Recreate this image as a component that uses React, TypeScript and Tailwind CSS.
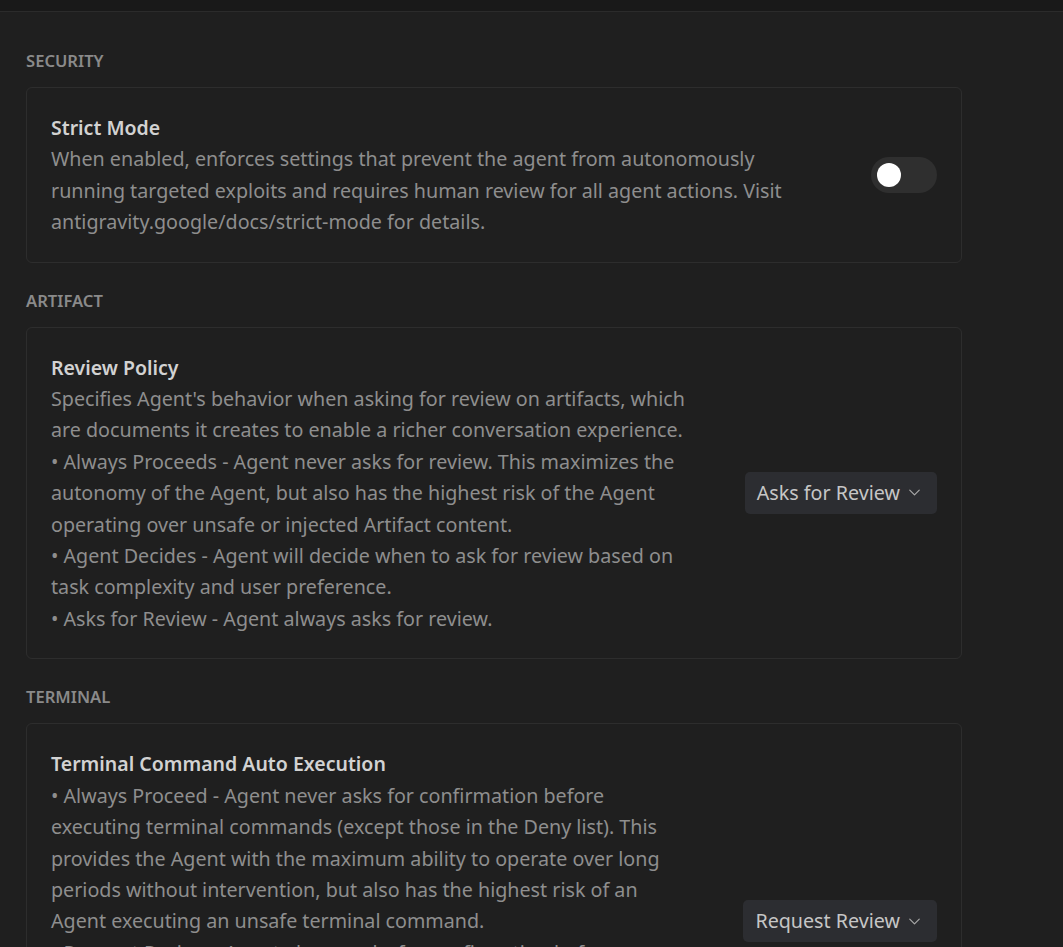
import { ChevronDown } from "lucide-react"

type Setting = {
  title: string
  lines: string[]
  control: "toggle" | "select"
  value?: string
}

const sections: { label: string; settings: Setting[] }[] = [
  {
    label: "SECURITY",
    settings: [
      {
        title: "Strict Mode",
        control: "toggle",
        lines: [
          "When enabled, enforces settings that prevent the agent from autonomously",
          "running targeted exploits and requires human review for all agent actions. Visit",
          "antigravity.google/docs/strict-mode for details.",
        ],
      },
    ],
  },
  {
    label: "ARTIFACT",
    settings: [
      {
        title: "Review Policy",
        control: "select",
        value: "Asks for Review",
        lines: [
          "Specifies Agent's behavior when asking for review on artifacts, which",
          "are documents it creates to enable a richer conversation experience.",
          "• Always Proceeds - Agent never asks for review. This maximizes the",
          "autonomy of the Agent, but also has the highest risk of the Agent",
          "operating over unsafe or injected Artifact content.",
          "• Agent Decides - Agent will decide when to ask for review based on",
          "task complexity and user preference.",
          "• Asks for Review - Agent always asks for review.",
        ],
      },
    ],
  },
  {
    label: "TERMINAL",
    settings: [
      {
        title: "Terminal Command Auto Execution",
        control: "select",
        value: "Request Review",
        lines: [
          "• Always Proceed - Agent never asks for confirmation before",
          "executing terminal commands (except those in the Deny list). This",
          "provides the Agent with the maximum ability to operate over long",
          "periods without intervention, but also has the highest risk of an",
          "Agent executing an unsafe terminal command.",
          "• Request Review - Agent always asks for confirmation before",
          "executing terminal commands (except those in the Allow list).",
          "• Turbo - Agent automatically executes terminal commands unless",
          "they are in the Deny list, without asking for confirmation.",
          "",
        ],
      },
    ],
  },
]

function Toggle() {
  return (
    <div className="flex h-[36px] w-[66px] shrink-0 items-center rounded-full bg-[#2f2f2f] px-[6px]">
      <div className="h-[24px] w-[24px] rounded-full bg-white" />
    </div>
  )
}

function Select({ value }: { value: string }) {
  return (
    <div className="flex h-[42px] shrink-0 items-center gap-[5px] rounded-[5px] bg-[#2c2d31] pl-[12px] pr-[13px] text-[19.7px] text-[#c6c6c6]">
      <span>{value}</span>
      <ChevronDown size={19} strokeWidth={1.5} className="text-[#a8a8a8]" />
    </div>
  )
}

function SettingCard({ s }: { s: Setting }) {
  return (
    <div className="flex w-[936px] items-center justify-between gap-12 rounded-[6px] border border-[#2d2d2d] px-[24px] py-[24px]">
      <div className="min-w-0 leading-[31.4px]">
        <div className="text-[19.5px] font-semibold text-[#d2d2d2]">{s.title}</div>
        {s.lines.map((l, i) => (
          <div key={i} className="whitespace-nowrap text-[19.7px] text-[#8e8e8e]">
            {l || "\u00a0"}
          </div>
        ))}
      </div>
      {s.control === "toggle" ? <Toggle /> : <Select value={s.value ?? ""} />}
    </div>
  )
}

export default function App() {
  return (
    <div
      className="h-[947px] w-full overflow-hidden bg-[#1f1f1f]"
      style={{ fontFamily: '"Noto Sans", "Open Sans", sans-serif' }}
    >
      <div className="h-[12px] border-b border-[#2b2b2b] bg-[#191919]" />
      <div className="px-[26px] pt-[37px]">
        {sections.map((sec) => (
          <div key={sec.label} className="mb-[26px]">
            <div className="mb-[14px] text-[16.6px] font-semibold leading-[24px] text-[#8a8a8a]">{sec.label}</div>
            {sec.settings.map((s) => (
              <SettingCard key={s.title} s={s} />
            ))}
          </div>
        ))}
      </div>
    </div>
  )
}
